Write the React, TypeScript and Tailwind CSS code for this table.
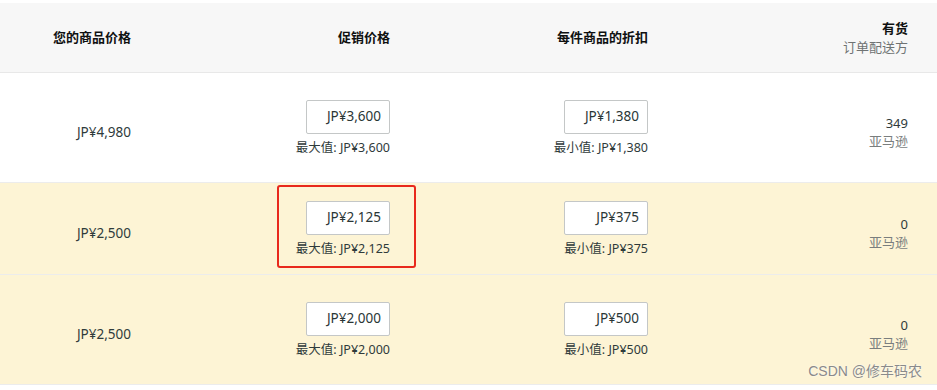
const rows = [
  {
    price: 'JP¥4,980',
    promo: 'JP¥3,600',
    discount: 'JP¥1,380',
    stock: '349',
    highlight: false,
    marked: false,
    height: 'h-[110px]',
  },
  {
    price: 'JP¥2,500',
    promo: 'JP¥2,125',
    discount: 'JP¥375',
    stock: '0',
    highlight: true,
    marked: true,
    height: 'h-[92px]',
  },
  {
    price: 'JP¥2,500',
    promo: 'JP¥2,000',
    discount: 'JP¥500',
    stock: '0',
    highlight: true,
    marked: false,
    height: 'h-[110px]',
  },
];

const grid = 'grid grid-cols-[131px_259px_258px_260px] items-center';

function PriceInput({ value, hint }: { value: string; hint: string }) {
  return (
    <div className="flex flex-col items-end">
      <div className="w-[84px] h-[34px] bg-white border border-[#c4c7c7] rounded-[2px] flex items-center justify-end pr-[8px] text-[13.5px] text-[#2a3636]">
        {value}
      </div>
      <div className="mt-[6px] text-[12.5px] leading-[16px] text-[#2f3b3b]">{hint}</div>
    </div>
  );
}

export default function App() {
  return (
    <div className="relative w-[937px] h-[390px] bg-white overflow-hidden font-['Noto_Sans','Noto_Sans_CJK_SC',sans-serif]">
      <div className="h-[3px]" />
      <div className={`${grid} h-[70px] bg-[#f7f7f7] border-b border-[#e8e8e8] text-[13px] font-bold text-[#0f1111]`}>
        <div className="text-right">您的商品价格</div>
        <div className="text-right">促销价格</div>
        <div className="text-right">每件商品的折扣</div>
        <div className="text-right leading-[19px]">
          <div>有货</div>
          <div className="font-normal text-[#6f7373]">订单配送方</div>
        </div>
      </div>

      {rows.map((row, i) => (
        <div
          key={i}
          className={`${grid} ${row.height} border-b border-[#ececec] ${
            row.highlight ? 'bg-[#fdf4d5]' : 'bg-white'
          }`}
        >
          <div className="text-right pt-[10px] text-[13.5px] text-[#2f3b3b]">{row.price}</div>
          <div className="relative flex justify-end">
            <PriceInput value={row.promo} hint={`最大值: ${row.promo}`} />
            {row.marked && (
              <div className="absolute left-[146px] top-[-16px] w-[139px] h-[83px] border-[2.5px] border-[#e8291c] rounded-[3px]" />
            )}
          </div>
          <div className="flex justify-end">
            <PriceInput value={row.discount} hint={`最小值: ${row.discount}`} />
          </div>
          <div className="text-right pt-[9px] text-[13px] leading-[18px]">
            <div className="text-[#2f3b3b]">{row.stock}</div>
            <div className="text-[#7a7e7e]">亚马逊</div>
          </div>
        </div>
      ))}

      <div className="absolute right-[15px] bottom-[8px] text-[14px] text-[#8a8a8a] font-['Liberation_Sans','Noto_Sans_CJK_SC',sans-serif] [text-shadow:0_0_2px_#fff]">
        CSDN @修车码农
      </div>
    </div>
  );
}
